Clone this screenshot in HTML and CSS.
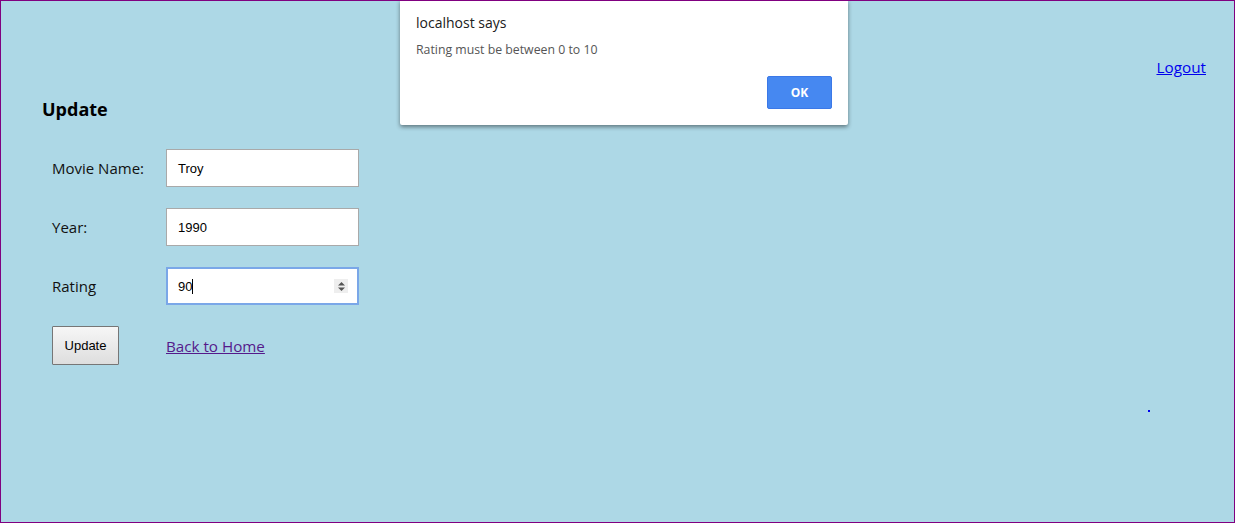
FILE: index.html
```html
<!DOCTYPE html>
<html>
<head>
<meta charset="utf-8">
<link rel="stylesheet" href="styles.css">
</head>
<body>
<div class="page">
  <div class="topbar"><a href="#" class="logout">Logout</a></div>
  <h2 class="title">Update</h2>
  <div class="form">
    <label class="lbl">Movie Name:</label>
    <div class="field">Troy</div>
    <label class="lbl">Year:</label>
    <div class="field">1990</div>
    <label class="lbl">Rating</label>
    <div class="field focus"><span>90<span class="caret"></span></span>
      <span class="spin"><svg width="9" height="11" viewBox="0 0 9 11"><path d="M4.5 1 L8 4.5 L1 4.5 Z M4.5 10 L8 6.5 L1 6.5 Z" fill="#555"/></svg></span>
    </div>
    <div class="btnwrap"><button class="btn">Update</button></div>
    <div class="linkwrap"><a href="#" class="back">Back to Home</a></div>
  </div>
  <div class="dotrow"><span class="dot"></span></div>
</div>
<div class="dialog">
  <div class="dtitle">localhost says</div>
  <div class="dmsg">Rating must be between 0 to 10</div>
  <div class="dactions"><button class="ok">OK</button></div>
</div>
</body>
</html>
```
FILE: styles.css
```css
html, body { margin: 0; padding: 0; }
body {
  width: 1235px;
  height: 523px;
  box-sizing: border-box;
  border: 1px solid #800080;
  background: #add8e6;
  font-family: "Open Sans", "Noto Sans", sans-serif;
  position: relative;
  overflow: hidden;
}
.page { padding: 0 28px 0 41px; }
.topbar { display: flex; justify-content: flex-end; padding-top: 55px; height: 25px; }
.logout { color: #0000ee; font-size: 15.3px; line-height: 22px; }
.title { margin: 16px 0 0 0; font-size: 18px; font-weight: bold; line-height: 24px; color: #000; }
.form {
  display: grid;
  grid-template-columns: 114px 193px;
  row-gap: 21px;
  margin: 28px 0 0 10px;
  align-items: center;
}
.lbl { font-size: 15px; color: #111; }
.field {
  box-sizing: border-box;
  height: 38px;
  background: #fff;
  border: 1px solid #a9a9a9;
  display: flex; align-items: center; justify-content: space-between;
  padding: 0 12px 0 11px;
  font-family: "Liberation Sans", Arial, sans-serif;
  font-size: 13px;
  color: #000;
}
.field.focus { border: 2px solid #7aa7e8; padding: 0 9px 0 10px; }
.caret { display: inline-block; width: 1px; height: 15px; background: #000; vertical-align: -3px; }
.spin { display: flex; width: 14px; height: 14px; background: #eee; align-items: center; justify-content: center; }
.btn {
  box-sizing: border-box;
  width: 67px; height: 39px;
  border: 1px solid #767676;
  border-radius: 1px;
  background: linear-gradient(#f6f6f6, #dedede);
  font-family: "Liberation Sans", Arial, sans-serif;
  font-size: 13px;
  color: #000;
  padding: 0;
}
.back { color: #551a8b; font-size: 15.2px; }
.dotrow { display: flex; justify-content: flex-end; padding-right: 56px; margin-top: 45px; }
.dot { width: 2px; height: 2px; background: #0000ee; }
.dialog {
  position: absolute;
  left: 399px; top: -1px;
  width: 448px; height: 125px;
  background: #fff;
  box-shadow: 0 2px 4px rgba(0,0,0,0.45);
  border-radius: 0 0 2px 2px;
  box-sizing: border-box;
  padding: 13px 16px 0 16px;
}
.dtitle { font-size: 14px; color: #202020; line-height: 20px; }
.dmsg { font-size: 12.3px; color: #555; margin-top: 8px; line-height: 18px; }
.dactions { display: flex; justify-content: flex-end; margin-top: 17px; }
.ok {
  width: 65px; height: 33px;
  background: #4688f1;
  border: 1px solid #3b78e7;
  border-radius: 2px;
  color: #fff;
  font-weight: bold;
  font-size: 12px;
  font-family: "Open Sans", sans-serif;
}
```
